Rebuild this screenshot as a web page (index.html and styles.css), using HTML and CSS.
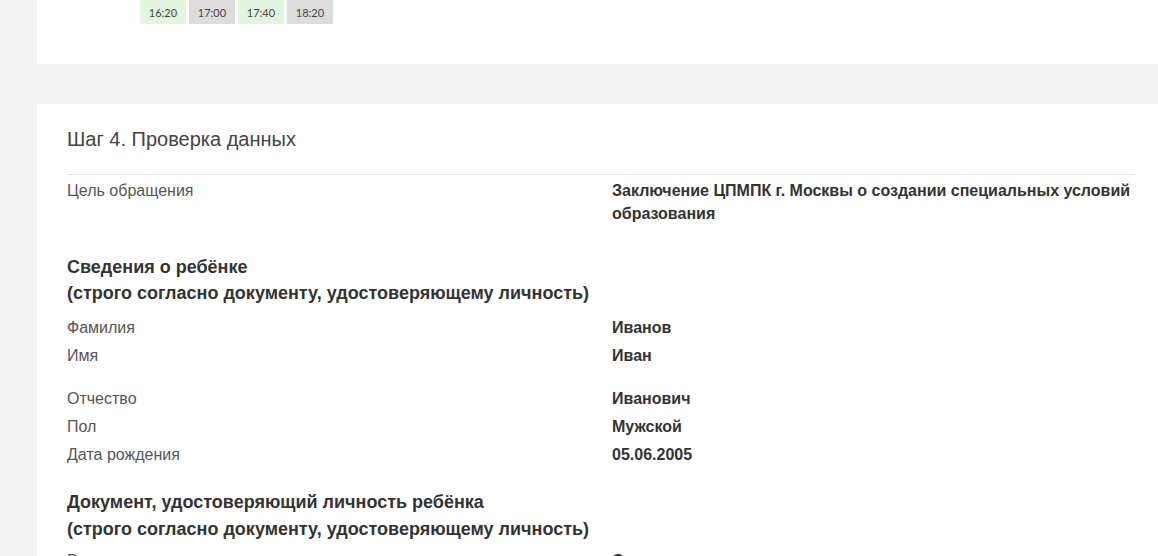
FILE: index.html
```html
<!DOCTYPE html>
<html lang="ru">
<head>
<meta charset="utf-8">
<title>Шаг 4. Проверка данных</title>
<link rel="stylesheet" href="styles.css">
</head>
<body>
<div class="page">
  <section class="card card-top">
    <div class="slots">
      <span class="slot free">16:20</span>
      <span class="slot busy">17:00</span>
      <span class="slot free">17:40</span>
      <span class="slot busy">18:20</span>
    </div>
  </section>
  <section class="card card-main">
    <h2 class="step-title">Шаг 4. Проверка данных</h2>
    <div class="divider"></div>
    <div class="row row-first">
      <div class="label">Цель обращения</div>
      <div class="value">Заключение ЦПМПК г. Москвы о создании специальных условий образования</div>
    </div>
    <h3 class="group-title">Сведения о ребёнке<br>(строго согласно документу, удостоверяющему личность)</h3>
    <div class="row">
      <div class="label">Фамилия</div>
      <div class="value">Иванов</div>
    </div>
    <div class="row row-gap">
      <div class="label">Имя</div>
      <div class="value">Иван</div>
    </div>
    <div class="row">
      <div class="label">Отчество</div>
      <div class="value">Иванович</div>
    </div>
    <div class="row">
      <div class="label">Пол</div>
      <div class="value">Мужской</div>
    </div>
    <div class="row">
      <div class="label">Дата рождения</div>
      <div class="value">05.06.2005</div>
    </div>
    <h3 class="group-title group-second">Документ, удостоверяющий личность ребёнка<br>(строго согласно документу, удостоверяющему личность)</h3>
    <div class="row">
      <div class="label">Вид документа</div>
      <div class="value">Свидетельство о рождении</div>
    </div>
  </section>
</div>
</body>
</html>
```

FILE: styles.css
```css
html, body {
  margin: 0;
  padding: 0;
  background: #f1f1f1;
  font-family: "Liberation Sans", Arial, sans-serif;
  color: #333;
}

.page {
  padding-left: 37px;
  display: flex;
  flex-direction: column;
  gap: 40px;
}

.card {
  background: #fff;
}

.card-top {
  height: 64px;
  box-sizing: border-box;
  padding-left: 103px;
}

.slots {
  display: flex;
  gap: 3px;
}

.slot {
  width: 46px;
  height: 24px;
  line-height: 25px;
  text-align: center;
  font-family: Lato, "Liberation Sans", sans-serif;
  font-size: 11px;
  color: #444;
}

.slot.free {
  background: #e3f5df;
}

.slot.busy {
  background: #dcdcdc;
}

.card-main {
  padding: 24px 24px 20px 30px;
}

.step-title {
  margin: 0;
  font-size: 20px;
  line-height: 22px;
  font-weight: normal;
  color: #444;
}

.divider {
  height: 1px;
  background: #e2e2e2;
  margin-top: 24px;
}

.row {
  display: grid;
  grid-template-columns: 545px 1fr;
  line-height: 28px;
}

.row-first {
  padding-top: 4px;
  line-height: 23px;
}

.row-gap {
  margin-bottom: 15px;
}

.label {
  font-size: 16px;
  color: #555;
}

.value {
  font-size: 16px;
  font-weight: bold;
  color: #333;
}

.group-title {
  margin: 29px 0 8px;
  font-size: 18px;
  line-height: 26px;
  font-weight: bold;
  color: #333;
}

.group-second {
  margin-top: 20px;
  margin-bottom: 4px;
  line-height: 27px;
}
```
